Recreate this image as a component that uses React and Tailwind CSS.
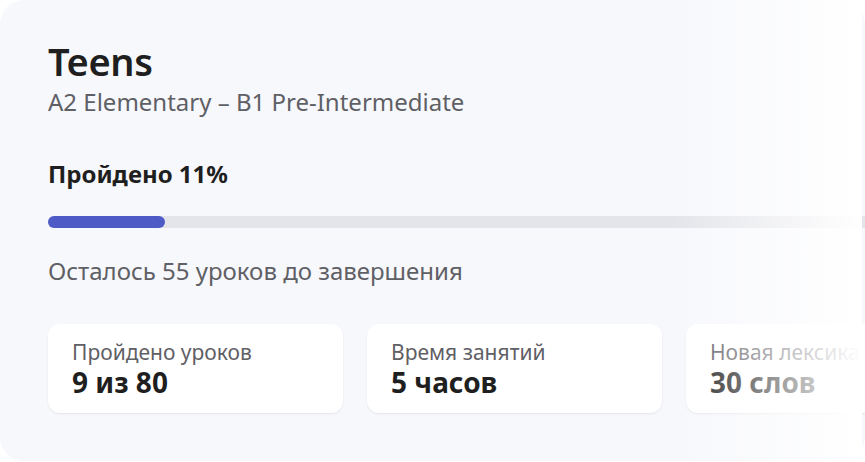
export default function App() {
  const stats = [
    { label: "Пройдено уроков", value: "9 из 80" },
    { label: "Время занятий", value: "5 часов" },
    { label: "Новая лексика", value: "30 слов" },
  ];
  return (
    <div className="w-[865px] h-[462px] bg-white" style={{ fontFamily: '"Noto Sans", sans-serif' }}>
      <div className="relative w-full h-[461px] bg-[#f7f8fc] rounded-3xl overflow-hidden pl-12 pt-[37px]">
        <h1 className="text-[38px] leading-[48px] font-semibold tracking-[-0.01em] text-[#1f1f1f]">Teens</h1>
        <p className="text-[24px] leading-[32px] text-[#5f6065] mt-px">A2 Elementary – B1 Pre-Intermediate</p>
        <p className="text-[24px] leading-[32px] font-bold text-[#1f1f1f] mt-[40px]">Пройдено 11%</p>
        <div className="mt-[26px] h-3 w-[840px] rounded-full bg-[#e4e5ea]">
          <div className="h-3 w-[117px] rounded-full bg-[#4e5bc6]" />
        </div>
        <p className="text-[24px] leading-[32px] text-[#5f6065] mt-[27px]">Осталось 55 уроков до завершения</p>
        <div className="flex gap-6 mt-[37px]">
          {stats.map((s) => (
            <div key={s.label} className="shrink-0 w-[295px] h-[89px] bg-white rounded-xl shadow-[0_1px_2px_rgba(0,0,0,0.08)] px-6 pt-[14px]">
              <div className="text-[21px] leading-[28px] text-[#5f6065]">{s.label}</div>
              <div className="text-[28px] leading-[36px] font-bold text-[#1f1f1f] -mt-[2px]">{s.value}</div>
            </div>
          ))}
        </div>
        <div className="pointer-events-none absolute top-0 bottom-0 right-[3px] w-[190px] bg-gradient-to-r from-[#f7f8fc00] to-white" />
      </div>
    </div>
  );
}
